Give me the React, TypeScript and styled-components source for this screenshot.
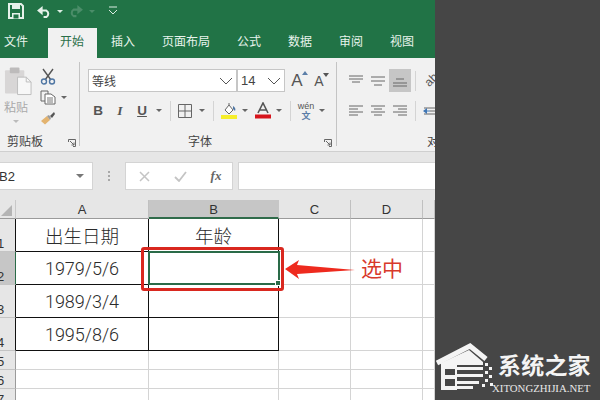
import React from "react";
import styled, { createGlobalStyle } from "styled-components";

const Global = createGlobalStyle`
  html, body { margin: 0; padding: 0; background: #464646; }
  #root { width: 600px; height: 400px; overflow: hidden; }
  * { box-sizing: border-box; }
`;

const CJK = `"Noto Sans CJK SC", "Liberation Sans", sans-serif`;
const GREEN = "#217346";

const Page = styled.div`
  position: relative;
  width: 600px;
  height: 400px;
  background: #464646;
  overflow: hidden;
  font-family: ${CJK};
`;
const Excel = styled.div`
  width: 435px;
  height: 400px;
  display: flex;
  flex-direction: column;
  overflow: hidden;
  background: #e6e6e6;
`;
const QuickBar = styled.div`
  height: 28px;
  flex: none;
  background: ${GREEN};
  display: flex;
  align-items: flex-start;
  padding-top: 1px;
`;
const QuickSlot = styled.div<{ $w: number }>`
  width: ${(p) => p.$w}px;
  height: 20px;
  display: flex;
  align-items: center;
  justify-content: center;
  flex: none;
`;
const TabRow = styled.div`
  height: 30px;
  flex: none;
  background: ${GREEN};
  display: flex;
  align-items: stretch;
`;
const Tab = styled.div<{ $active?: boolean; $first?: boolean }>`
  padding: ${(p) => (p.$first ? "0 18.5px 0 4px" : "0 12.5px")};
  margin: ${(p) => (p.$first ? "0" : "0 1px")};
  font-size: 12px;
  line-height: 25px;
  color: ${(p) => (p.$active ? "#2a6f49" : "#e8f3ec")};
  background: ${(p) => (p.$active ? "#f1f1f1" : "transparent")};
`;
const Ribbon = styled.div`
  height: 94px;
  flex: none;
  background: #f1f1f1;
  border-bottom: 1px solid #cfcfcf;
  display: flex;
`;
const Group = styled.div<{ $w: number; $pad: number }>`
  width: ${(p) => p.$w}px;
  flex: none;
  padding-left: ${(p) => p.$pad}px;
  padding-top: 11px;
  display: flex;
  flex-direction: column;
  position: relative;
  overflow: hidden;
`;
const GroupRule = styled.div`
  width: 1px;
  height: 84px;
  margin-top: 4px;
  background: #c4c4c4;
  flex: none;
`;
const Row = styled.div<{ $mt?: number }>`
  display: flex;
  align-items: center;
  height: 23px;
  margin-top: ${(p) => p.$mt ?? 0}px;
`;
const Slot = styled.div<{ $w: number; $on?: boolean }>`
  width: ${(p) => p.$w}px;
  height: 23px;
  flex: none;
  display: flex;
  align-items: center;
  justify-content: center;
  background: ${(p) => (p.$on ? "#c6c6c6" : "transparent")};
`;
const Rule = styled.div`
  width: 1px;
  height: 20px;
  background: #d4d4d4;
`;
const GroupLabel = styled.div<{ $indent: number }>`
  position: absolute;
  left: ${(p) => p.$indent}px;
  top: 74px;
  font-size: 12px;
  line-height: 18px;
  color: #444;
  white-space: nowrap;
`;
const Launcher = styled.div<{ $x: number }>`
  position: absolute;
  left: ${(p) => p.$x}px;
  top: 81px;
  width: 8px;
  height: 8px;
  display: flex;
`;
const ClipboardBody = styled.div`
  display: flex;
  height: 62px;
  margin-top: -3px;
`;
const PasteColumn = styled.div`
  width: 33px;
  display: flex;
  flex-direction: column;
  align-items: flex-start;
  font-size: 12px;
  line-height: 14px;
  color: #a9a9a9;
  padding-left: 1px;
`;
const PasteCaption = styled.span`
  margin-top: 4px;
`;
const PasteCaret = styled.span`
  display: flex;
  margin: 6px 0 0 9px;
`;
const ToolColumn = styled.div`
  display: flex;
  flex-direction: column;
  padding-left: 4px;
`;
const ToolRow = styled.div`
  display: flex;
  align-items: center;
  height: 24px;
  gap: 5px;
  width: 36px;
`;
const Select = styled.div<{ $w: number }>`
  width: ${(p) => p.$w}px;
  height: 23px;
  background: #fff;
  border: 1px solid #c6c6c6;
  display: flex;
  align-items: center;
  justify-content: space-between;
  padding: 0 3px;
  font-size: 12px;
  color: #444;
  flex: none;
`;
const SizeValue = styled.span`
  font-family: "Liberation Sans", sans-serif;
  font-size: 13px;
`;
const ButtonGlyph = styled.span<{ $italic?: boolean; $under?: boolean }>`
  font-family: ${(p) => (p.$italic ? `"Liberation Serif", serif` : `"Liberation Sans", sans-serif`)};
  font-weight: bold;
  font-style: ${(p) => (p.$italic ? "italic" : "normal")};
  text-decoration: ${(p) => (p.$under ? "underline" : "none")};
  font-size: 13.5px;
  color: #555;
`;
const GrowGlyph = styled.span<{ $size: number }>`
  font-family: "Liberation Sans", sans-serif;
  font-size: ${(p) => p.$size}px;
  color: #555;
  line-height: 1;
  position: relative;
  &::after {
    content: "";
    position: absolute;
    right: -5px;
    top: -1px;
    border: 3px solid transparent;
    border-top-width: 0;
    border-bottom: 4px solid #5b7ea8;
  }
`;
const ShrinkGlyph = styled(GrowGlyph)`
  &::after {
    border-bottom: 0;
    border-top: 4px solid #555;
  }
`;
const WenStack = styled.div`
  display: flex;
  flex-direction: column;
  align-items: center;
  line-height: 9px;
`;
const WenTop = styled.span`
  font-family: "Liberation Sans", sans-serif;
  font-size: 9px;
  color: #555;
`;
const WenBottom = styled.span`
  font-size: 9px;
  font-weight: bold;
  color: #5b7ea8;
`;
const Orient = styled.span`
  display: inline-block;
  font-family: "Liberation Sans", sans-serif;
  font-size: 12px;
  color: #555;
  transform: rotate(-45deg) translateX(2px);
`;
const FormulaBar = styled.div`
  height: 48px;
  flex: none;
  background: #e6e6e6;
  display: flex;
  align-items: flex-start;
  padding-top: 10px;
`;
const NameBox = styled.div`
  width: 93px;
  height: 28px;
  background: #fff;
  border: 1px solid #d4d4d4;
  border-left: 0;
  display: flex;
  align-items: center;
  justify-content: space-between;
  padding-right: 8px;
  font-family: "Liberation Sans", sans-serif;
  font-size: 13px;
  color: #333;
  overflow: hidden;
`;
const NameText = styled.span`
  margin-left: -1px;
`;
const Dots = styled.div`
  width: 32px;
  height: 28px;
  display: flex;
  flex-direction: column;
  align-items: center;
  justify-content: center;
  gap: 2px;
`;
const Dot = styled.i`
  width: 2px;
  height: 2px;
  background: #a8a8a8;
`;
const FxBox = styled.div`
  width: 108px;
  height: 28px;
  background: #fff;
  border: 1px solid #d4d4d4;
  display: grid;
  grid-template-columns: 36px 36px 36px;
  align-items: center;
  justify-items: center;
`;
const FxText = styled.span`
  font-family: "Liberation Serif", serif;
  font-style: italic;
  font-weight: bold;
  font-size: 13px;
  color: #666;
`;
const FormulaInput = styled.div`
  margin-left: 5px;
  flex: 1;
  height: 28px;
  background: #fff;
  border: 1px solid #d4d4d4;
  border-right: 0;
`;
const Sheet = styled.div`
  flex: 1;
  display: grid;
  grid-template-columns: 16px 133px 130px 72px 72px 12px;
  grid-template-rows: 19px 33px 33px 33px 33px 19px 19px 19px;
  background: #fff;
  overflow: hidden;
`;
const Corner = styled.div`
  background: #e6e6e6;
  border-bottom: 1px solid #9a9a9a;
  border-right: 1px solid #c8c8c8;
  display: flex;
  align-items: flex-end;
  justify-content: flex-end;
  padding: 0 3px 2px 0;
`;
const ColHead = styled.div<{ $on?: boolean }>`
  background: ${(p) => (p.$on ? "#c6c6c6" : "#e6e6e6")};
  border-bottom: ${(p) => (p.$on ? `2px solid #2f6b4a` : "1px solid #9a9a9a")};
  border-right: 1px solid ${(p) => (p.$on ? "#c6c6c6" : "#c0c0c0")};
  font-family: "Liberation Sans", sans-serif;
  font-size: 13px;
  line-height: 19px;
  color: #333;
  text-align: center;
`;
const RowHead = styled.div<{ $on?: boolean; $edge?: string }>`
  background: ${(p) => (p.$on ? "#c6c6c6" : "#e6e6e6")};
  border-bottom: 1px solid #c4c4c4;
  border-right: 1px solid ${(p) => p.$edge ?? "#9a9a9a"};
  font-family: "Liberation Sans", sans-serif;
  font-size: 13px;
  line-height: 15px;
  color: #333;
  display: flex;
  align-items: flex-end;
  overflow: hidden;
`;
const RowNum = styled.span`
  margin-left: -3px;
`;
const Cell = styled.div<{ $boxed?: boolean; $text?: boolean }>`
  border-right: 1px solid ${(p) => (p.$boxed ? "#111" : "#d4d4d4")};
  border-bottom: 1px solid ${(p) => (p.$boxed ? "#111" : "#d4d4d4")};
  display: flex;
  align-items: center;
  justify-content: center;
  font-family: ${(p) => (p.$text ? CJK : `Roboto, "Liberation Sans", ${CJK}`)};
  font-size: ${(p) => (p.$text ? "18.5px" : "18px")};
  font-weight: 300;
  color: #2b2b2b;
`;
const Selection = styled.div`
  position: absolute;
  left: 148px;
  top: 251px;
  width: 132px;
  height: 34px;
  border: 2px solid #2a6b48;
`;
const Handle = styled.div`
  position: absolute;
  right: -3px;
  bottom: -3px;
  width: 6px;
  height: 6px;
  background: #2a6b48;
  border: 1px solid #fff;
`;
const RedBox = styled.div`
  position: absolute;
  left: 141px;
  top: 247px;
  width: 143px;
  height: 44px;
  border: 3px solid #d9281f;
  border-radius: 3px;
`;
const Arrow = styled.svg`
  position: absolute;
  left: 284px;
  top: 258px;
  width: 74px;
  height: 22px;
`;
const Callout = styled.div`
  position: absolute;
  left: 361px;
  top: 252px;
  font-size: 21px;
  line-height: 30px;
  color: #d8392b;
`;
const Mark = styled.div`
  position: absolute;
  left: 435px;
  top: 338px;
  width: 165px;
  height: 60px;
`;
const MarkCn = styled.div`
  position: absolute;
  left: 63px;
  top: 9px;
  font-size: 23px;
  line-height: 34px;
  letter-spacing: 0.2px;
  font-weight: 700;
  color: #f4f4f4;
  white-space: nowrap;
`;
const MarkEn = styled.div`
  position: absolute;
  left: 57px;
  top: 44px;
  font-family: "Liberation Serif", serif;
  font-size: 10.8px;
  line-height: 12px;
  color: #e8e8e8;
  white-space: nowrap;
`;

/* ---------- icons ---------- */
const Caret = ({ c = "#666", s = 3 }: { c?: string; s?: number }) => (
  <svg width={s * 2} height={s} viewBox="0 0 6 3"><path d="M0 0h6L3 3z" fill={c} /></svg>
);
const Chevron = () => (
  <svg width="14" height="8" viewBox="0 0 14 8"><path d="M1 1l6 6 6-6" fill="none" stroke="#555" strokeWidth="1" /></svg>
);
const SaveIcon = () => (
  <svg width="16" height="16" viewBox="0 0 16 16">
    <path d="M1 1h12l2 2v12H1z" fill="none" stroke="#e6f2ea" strokeWidth="2" />
    <path d="M4 1h8v5H4zM4 10h8v5H4z" fill="#e6f2ea" />
    <path d="M5.500 11.500h5v4h-5z" fill="#217346" />
  </svg>
);
const UndoIcon = ({ c }: { c: string }) => (
  <svg width="15" height="13" viewBox="0 0 16 14">
    <path d="M2 6h8a4 4 0 0 1 0 7H7" fill="none" stroke={c} strokeWidth="2.2" />
    <path d="M0 6l6-5v10z" fill={c} />
  </svg>
);
const RedoIcon = ({ c }: { c: string }) => (
  <svg width="15" height="13" viewBox="0 0 16 14">
    <path d="M14 5H6a4 4 0 0 0 0 7h3" fill="none" stroke={c} strokeWidth="2.2" />
    <path d="M16 5l-6-5v10z" fill={c} />
  </svg>
);
const CustomizeIcon = () => (
  <svg width="10" height="10" viewBox="0 0 10 10">
    <path d="M1 1h8" stroke="#dceee3" strokeWidth="1" />
    <path d="M1 4l4 4 4-4" fill="none" stroke="#dceee3" strokeWidth="1" />
  </svg>
);
const PasteIcon = () => (
  <svg width="29" height="30" viewBox="0 0 30 30">
    <rect x="1" y="4" width="20" height="24" rx="1" fill="#d8d6d6" />
    <rect x="6" y="1" width="10" height="6" rx="1" fill="#bdbbbb" />
    <path d="M14 11h9l5 5v13H14z" fill="#f7f7f7" stroke="#bdbdbd" />
    <path d="M23 11v5h5" fill="none" stroke="#bdbdbd" />
  </svg>
);
const CutIcon = () => (
  <svg width="16" height="17" viewBox="0 0 16 17">
    <path d="M3 1l8 11M13 1L5 12" stroke="#555" strokeWidth="1.4" />
    <circle cx="4" cy="13.5" r="2.5" fill="none" stroke="#4f76a3" strokeWidth="1.4" />
    <circle cx="12" cy="13.5" r="2.5" fill="none" stroke="#4f76a3" strokeWidth="1.4" />
  </svg>
);
const CopyIcon = () => (
  <svg width="16" height="15" viewBox="0 0 16 15">
    <path d="M1 1h7v3M1 1v10h4" fill="none" stroke="#666" />
    <path d="M5 4h6l4 3v7H5z" fill="#fff" stroke="#666" />
    <path d="M7 8h6M7 10h6M7 12h6" stroke="#777" />
  </svg>
);
const BrushIcon = () => (
  <svg width="16" height="14" viewBox="0 0 16 14">
    <path d="M1 10l6-5 3 4-5 4.500z" fill="#e3b36f" />
    <path d="M7 5l2-1 2 3-1 2z" fill="#999" />
    <path d="M10 5l4-4 1 2-3 4z" fill="#555" />
  </svg>
);
const LauncherIcon = () => (
  <svg width="8" height="8" viewBox="0 0 8 8">
    <path d="M.5 3V.5H7.500V7.500H5M2 2l4 4M6 3.500V6H3.500" fill="none" stroke="#666" />
  </svg>
);
const BorderIcon = () => (
  <svg width="14" height="14" viewBox="0 0 14 14">
    <path d="M.5.5h13v13H.5zM7 .5v13M.5 7h13" fill="none" stroke="#666" />
  </svg>
);
const FillIcon = () => (
  <svg width="18" height="18" viewBox="0 0 18 18">
    <path d="M5 8l4-5 4 5-4 4z" fill="#fff" stroke="#666" />
    <path d="M9 3V1" stroke="#666" />
    <path d="M13 4c2 1 3 3 2 5l-2-2z" fill="#4f76a3" />
    <rect x="1" y="13" width="16" height="4" fill="#f6ee2b" />
  </svg>
);
const FontColorIcon = () => (
  <svg width="16" height="17" viewBox="0 0 16 17">
    <path d="M3 11L8 1l5 10M5 8h6" fill="none" stroke="#555" strokeWidth="1.600" />
    <rect x="0" y="12.500" width="16" height="4" fill="#d6141c" />
  </svg>
);
const AlignIcon = ({ lines }: { lines: [number, number, number][] }) => (
  <svg width="15" height="14" viewBox="0 0 15 14">
    {lines.map(([x, w, y], i) => (
      <path key={i} d={`M${x} ${y}h${w}`} stroke="#666" strokeWidth="1" />
    ))}
  </svg>
);
const IndentIcon = () => (
  <svg width="15" height="14" viewBox="0 0 15 14">
    <path d="M1 4h14M7 7h8M1 10h14" stroke="#666" />
    <path d="M0 7l4-3v6z" fill="#3f76b5" />
    <path d="M3 7h4" stroke="#3f76b5" />
  </svg>
);
const CrossIcon = () => (
  <svg width="11" height="11" viewBox="0 0 11 11"><path d="M1 1l9 9M10 1l-9 9" stroke="#c4c4c4" strokeWidth="1.500" /></svg>
);
const CheckIcon = () => (
  <svg width="13" height="11" viewBox="0 0 13 11"><path d="M1 6l4 4 7-9" fill="none" stroke="#c4c4c4" strokeWidth="1.800" /></svg>
);
const CornerIcon = () => (
  <svg width="11" height="11" viewBox="0 0 11 11"><path d="M11 0v11H0z" fill="#b4b4b4" /></svg>
);
const HouseLogo = () => (
  <svg width="62" height="60" viewBox="0 0 62 60" style={{ position: "absolute", left: 0, top: 0 }}>
    <path d="M2 25L35 8l16 13" fill="none" stroke="#f4f4f4" strokeWidth="5" />
    <path d="M6 25L34 12l14 12v3H22v25H6z" fill="#f4f4f4" />
    <path d="M10 31h10v6H10zM10 41h10v7H10z" fill="#464646" />
    <path d="M22 29h26v3H22zM22 36h26v3H22zM22 43h22v3H22z" fill="#f4f4f4" />
    <path d="M22 32h24v4H22zM22 39h22v4H22zM22 46h18v6H22z" fill="#464646" />
    <path d="M22 48h16v3H22z" fill="#f4f4f4" />
    <path d="M50 25h3v3h-3zM54 29h3v3h-3zM50 33h3v3h-3zM54 37h3v3h-3zM50 41h3v3h-3zM47 46h3v3h-3zM55 45h3v3h-3z" fill="#f4f4f4" />
  </svg>
);

/* ---------- data ---------- */
const tabs = ["文件", "开始", "插入", "页面布局", "公式", "数据", "审阅", "视图"];
const top: [number, number, number][] = [[0, 14, 2], [0, 14, 5], [3, 8, 8]];
const mid: [number, number, number][] = [[0, 14, 3], [0, 14, 7], [3, 8, 11]];
const bot: [number, number, number][] = [[3, 8, 5], [0, 14, 9], [0, 14, 12]];
const left: [number, number, number][] = [[0, 14, 2], [0, 9, 5], [0, 14, 8], [0, 9, 11]];
const center: [number, number, number][] = [[0, 14, 2], [3, 8, 5], [0, 14, 8], [3, 8, 11]];
const right: [number, number, number][] = [[0, 14, 2], [5, 9, 5], [0, 14, 8], [5, 9, 11]];
const rows: { n: number; a?: string; b?: string; name?: boolean }[] = [
  { n: 1, a: "出生日期", b: "年龄", name: true },
  { n: 2, a: "1979/5/6", b: "" },
  { n: 3, a: "1989/3/4", b: "" },
  { n: 4, a: "1995/8/6", b: "" },
];

export default function App() {
  return (
    <Page>
      <Global />
      <Excel>
        <QuickBar>
          <QuickSlot $w={32}><SaveIcon /></QuickSlot>
          <QuickSlot $w={24}><UndoIcon c="#e6f2ea" /></QuickSlot>
          <QuickSlot $w={8}><Caret c="#dceee3" /></QuickSlot>
          <QuickSlot $w={22}><RedoIcon c="#4b8d69" /></QuickSlot>
          <QuickSlot $w={12}><Caret c="#4b8d69" /></QuickSlot>
          <QuickSlot $w={30}><CustomizeIcon /></QuickSlot>
        </QuickBar>
        <TabRow>
          {tabs.map((t, i) => (
            <Tab key={t} $first={i === 0} $active={i === 1}>{t}</Tab>
          ))}
        </TabRow>
        <Ribbon>
          <Group $w={79} $pad={3}>
            <ClipboardBody>
              <PasteColumn>
                <PasteIcon />
                <PasteCaption>粘贴</PasteCaption>
                <PasteCaret><Caret c="#bbb" /></PasteCaret>
              </PasteColumn>
              <ToolColumn>
                <ToolRow><CutIcon /></ToolRow>
                <ToolRow><CopyIcon /><Caret /></ToolRow>
                <ToolRow><BrushIcon /></ToolRow>
              </ToolColumn>
            </ClipboardBody>
            <GroupLabel $indent={7}>剪贴板</GroupLabel>
            <Launcher $x={68}><LauncherIcon /></Launcher>
          </Group>
          <GroupRule />
          <Group $w={256} $pad={8}>
            <Row>
              <Select $w={149}><span>等线</span><Chevron /></Select>
              <Select $w={48}><SizeValue>14</SizeValue><Chevron /></Select>
              <Slot $w={24}><GrowGlyph $size={17}>A</GrowGlyph></Slot>
              <Slot $w={20}><ShrinkGlyph $size={14}>A</ShrinkGlyph></Slot>
            </Row>
            <Row $mt={7}>
              <Slot $w={20}><ButtonGlyph>B</ButtonGlyph></Slot>
              <Slot $w={24}><ButtonGlyph $italic>I</ButtonGlyph></Slot>
              <Slot $w={20}><ButtonGlyph $under>U</ButtonGlyph></Slot>
              <Slot $w={14}><Caret /></Slot>
              <Slot $w={8}><Rule /></Slot>
              <Slot $w={22}><BorderIcon /></Slot>
              <Slot $w={12}><Caret /></Slot>
              <Slot $w={10}><Rule /></Slot>
              <Slot $w={22}><FillIcon /></Slot>
              <Slot $w={10}><Caret /></Slot>
              <Slot $w={26}><FontColorIcon /></Slot>
              <Slot $w={6}><Caret /></Slot>
              <Slot $w={16}><Rule /></Slot>
              <Slot $w={16}>
                <WenStack><WenTop>wén</WenTop><WenBottom>文</WenBottom></WenStack>
              </Slot>
              <Slot $w={16}><Caret /></Slot>
            </Row>
            <GroupLabel $indent={108}>字体</GroupLabel>
            <Launcher $x={244}><LauncherIcon /></Launcher>
          </Group>
          <GroupRule />
          <Group $w={98} $pad={8}>
            <Row>
              <Slot $w={22}><AlignIcon lines={top} /></Slot>
              <Slot $w={22}><AlignIcon lines={mid} /></Slot>
              <Slot $w={22} $on><AlignIcon lines={bot} /></Slot>
              <Slot $w={8}><Rule /></Slot>
              <Slot $w={22}><Orient>ab</Orient></Slot>
            </Row>
            <Row $mt={7}>
              <Slot $w={22}><AlignIcon lines={left} /></Slot>
              <Slot $w={22}><AlignIcon lines={center} /></Slot>
              <Slot $w={22}><AlignIcon lines={right} /></Slot>
              <Slot $w={8}><Rule /></Slot>
              <Slot $w={22}><IndentIcon /></Slot>
            </Row>
            <GroupLabel $indent={90}>对齐方式</GroupLabel>
          </Group>
        </Ribbon>
        <FormulaBar>
          <NameBox><NameText>B2</NameText><Caret c="#777" s={4} /></NameBox>
          <Dots><Dot /><Dot /><Dot /></Dots>
          <FxBox><CrossIcon /><CheckIcon /><FxText>fx</FxText></FxBox>
          <FormulaInput />
        </FormulaBar>
        <Sheet>
          <Corner><CornerIcon /></Corner>
          {["A", "B", "C", "D", ""].map((c) => (
            <ColHead key={c} $on={c === "B"}>{c}</ColHead>
          ))}
          {rows.map((r) => (
            <React.Fragment key={r.n}>
              <RowHead $on={r.n === 2} $edge={r.n === 2 ? "#2a6b48" : "#111"}><RowNum>{r.n}</RowNum></RowHead>
              <Cell $boxed $text={r.name}>{r.a}</Cell>
              <Cell $boxed $text={r.name}>{r.b}</Cell>
              <Cell /><Cell /><Cell />
            </React.Fragment>
          ))}
          {[5, 6, 7].map((n) => (
            <React.Fragment key={n}>
              <RowHead><RowNum>{n}</RowNum></RowHead>
              <Cell /><Cell /><Cell /><Cell /><Cell />
            </React.Fragment>
          ))}
        </Sheet>
      </Excel>
      <Selection><Handle /></Selection>
      <RedBox />
      <Arrow viewBox="0 0 74 22">
        <path d="M1 11L15 2l-2 5 58 5-58 4 2 5z" fill="#ee2a1e" />
      </Arrow>
      <Callout>选中</Callout>
      <Mark>
        <HouseLogo />
        <MarkCn>系统之家</MarkCn>
        <MarkEn>XITONGZHIJIA.NET</MarkEn>
      </Mark>
    </Page>
  );
}
